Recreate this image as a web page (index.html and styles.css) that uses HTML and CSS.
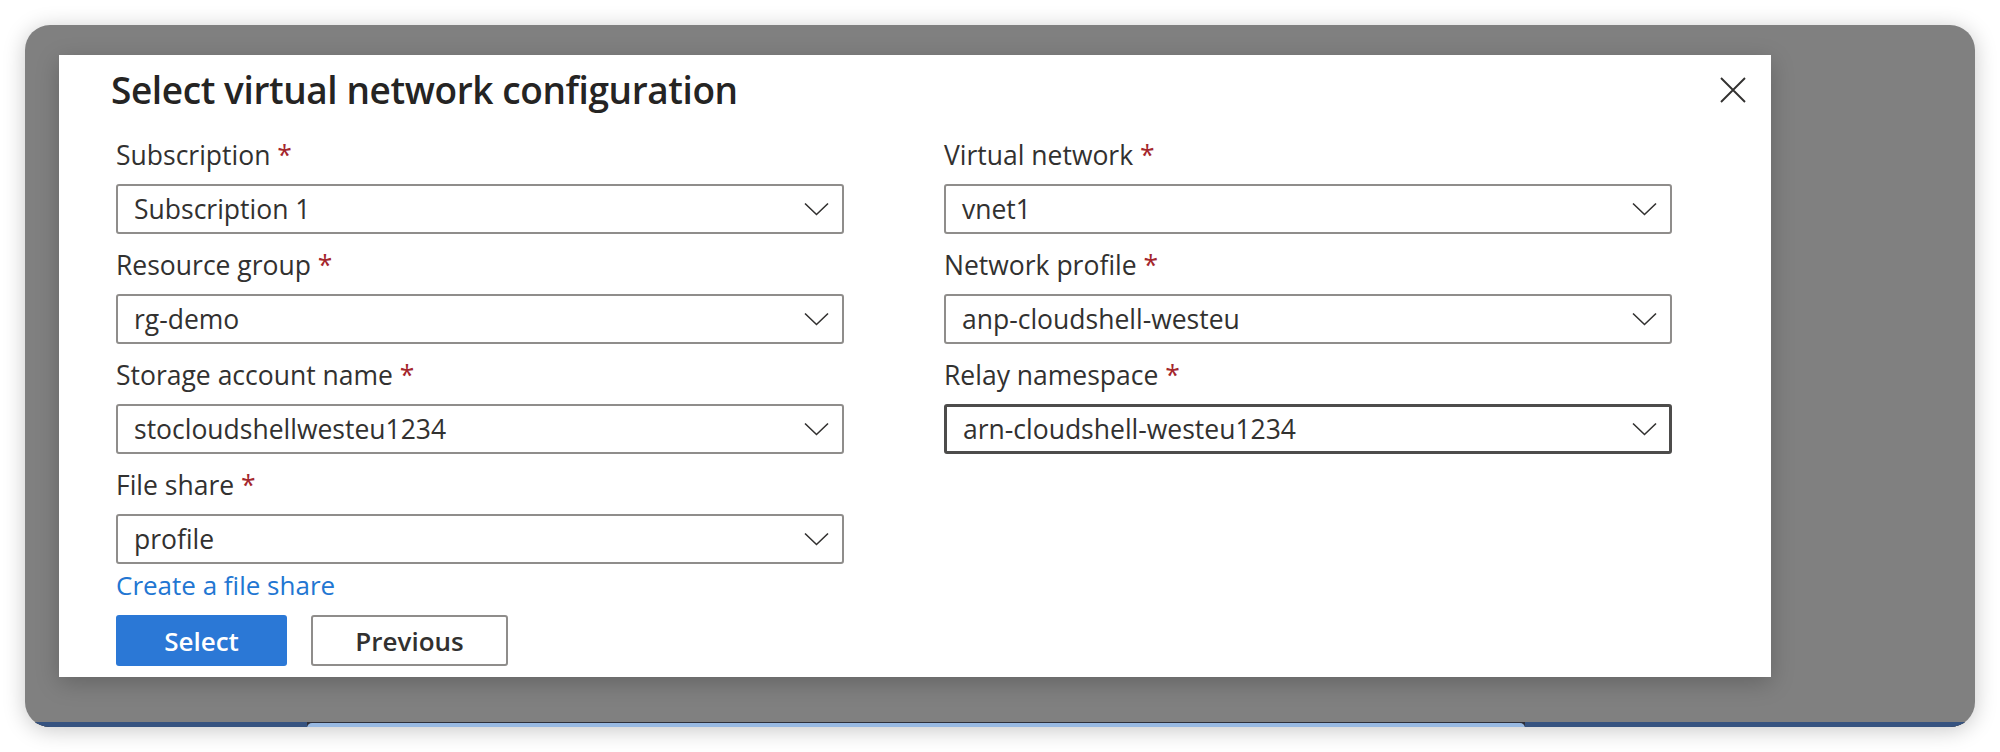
FILE: index.html
```html
<!DOCTYPE html>
<html lang="en">
<head>
<meta charset="utf-8">
<title>Select virtual network configuration</title>
<link rel="stylesheet" href="styles.css">
</head>
<body>
<div class="window">
  <div class="overlay">
    <div class="dialog">
      <div class="header">
        <h1 class="title">Select virtual network configuration</h1>
        <button class="close" aria-label="Close">
          <svg width="26" height="26" viewBox="0 0 26 26"><path d="M1 1 L25 25 M25 1 L1 25" stroke="#323130" stroke-width="1.9" fill="none"/></svg>
        </button>
      </div>
      <div class="form">
        <div class="col">
          <div class="field">
            <div class="label">Subscription <span class="req">*</span></div>
            <div class="select"><span class="value">Subscription 1</span><svg class="chev" width="25" height="14" viewBox="0 0 25 14"><path d="M1 1.5 L12.5 12.5 L24 1.5" stroke="#323130" stroke-width="1.6" fill="none"/></svg></div>
          </div>
          <div class="field">
            <div class="label">Resource group <span class="req">*</span></div>
            <div class="select"><span class="value">rg-demo</span><svg class="chev" width="25" height="14" viewBox="0 0 25 14"><path d="M1 1.5 L12.5 12.5 L24 1.5" stroke="#323130" stroke-width="1.6" fill="none"/></svg></div>
          </div>
          <div class="field">
            <div class="label">Storage account name <span class="req">*</span></div>
            <div class="select"><span class="value">stocloudshellwesteu1234</span><svg class="chev" width="25" height="14" viewBox="0 0 25 14"><path d="M1 1.5 L12.5 12.5 L24 1.5" stroke="#323130" stroke-width="1.6" fill="none"/></svg></div>
          </div>
          <div class="field">
            <div class="label">File share <span class="req">*</span></div>
            <div class="select"><span class="value">profile</span><svg class="chev" width="25" height="14" viewBox="0 0 25 14"><path d="M1 1.5 L12.5 12.5 L24 1.5" stroke="#323130" stroke-width="1.6" fill="none"/></svg></div>
          </div>
          <a class="link" href="#">Create a file share</a>
          <div class="actions">
            <button class="btn primary">Select</button>
            <button class="btn secondary">Previous</button>
          </div>
        </div>
        <div class="col">
          <div class="field">
            <div class="label">Virtual network <span class="req">*</span></div>
            <div class="select"><span class="value">vnet1</span><svg class="chev" width="25" height="14" viewBox="0 0 25 14"><path d="M1 1.5 L12.5 12.5 L24 1.5" stroke="#323130" stroke-width="1.6" fill="none"/></svg></div>
          </div>
          <div class="field">
            <div class="label">Network profile <span class="req">*</span></div>
            <div class="select"><span class="value">anp-cloudshell-westeu</span><svg class="chev" width="25" height="14" viewBox="0 0 25 14"><path d="M1 1.5 L12.5 12.5 L24 1.5" stroke="#323130" stroke-width="1.6" fill="none"/></svg></div>
          </div>
          <div class="field">
            <div class="label">Relay namespace <span class="req">*</span></div>
            <div class="select focused"><span class="value">arn-cloudshell-westeu1234</span><svg class="chev" width="25" height="14" viewBox="0 0 25 14"><path d="M1 1.5 L12.5 12.5 L24 1.5" stroke="#323130" stroke-width="1.6" fill="none"/></svg></div>
          </div>
        </div>
      </div>
    </div>
  </div>
  <div class="strip">
    <div class="seg dark first"></div>
    <div class="seg light"></div>
    <div class="seg dark last"></div>
  </div>
</div>
</body>
</html>
```

FILE: styles.css
```css
* { box-sizing: border-box; }
html, body { margin: 0; padding: 0; background: #ffffff; }
body {
  padding: 25px;
  font-family: "Open Sans", "Noto Sans", "Liberation Sans", sans-serif;
  color: #323130;
}
.window {
  width: 1950px;
  height: 702px;
  border-radius: 25px;
  overflow: hidden;
  background: #808080;
  display: flex;
  flex-direction: column;
  box-shadow: 0 3px 22px rgba(0, 0, 0, 0.22);
}
.overlay {
  flex: 1;
  padding: 30px 0 0 34px;
}
.dialog {
  width: 1712px;
  height: 622px;
  background: #ffffff;
  padding: 11px 25px 11px 52px;
  box-shadow: 0 6px 22px rgba(0, 0, 0, 0.22);
  display: flex;
  flex-direction: column;
}
.header {
  display: flex;
  justify-content: space-between;
  align-items: center;
  height: 48px;
}
.title {
  margin: 0;
  font-size: 37px;
  letter-spacing: -0.4px;
  line-height: 50px;
  font-weight: 600;
  color: #252423;
}
.close {
  border: 0;
  background: transparent;
  padding: 0;
  width: 26px;
  height: 26px;
  display: flex;
}
.form {
  display: flex;
  gap: 100px;
  margin: 26px 0 0 5px;
}
.col {
  width: 728px;
  display: flex;
  flex-direction: column;
  gap: 16px;
}
.field {
  display: flex;
  flex-direction: column;
}
.label {
  font-size: 26.5px;
  line-height: 30px;
  color: #323130;
  margin-bottom: 14px;
}
.req { color: #a4262c; }
.select {
  height: 50px;
  border: 2px solid #8f8d8b;
  border-radius: 3px;
  display: flex;
  align-items: center;
  justify-content: space-between;
  padding: 0 13px 0 16px;
  font-size: 26.5px;
  color: #323130;
}
.select.focused {
  border: 3px solid #4d4c4b;
  padding: 0 12px 0 16px;
}
.link {
  font-size: 26px;
  line-height: 30px;
  color: #2276d2;
  text-decoration: none;
  margin-top: -10px;
  align-self: flex-start;
}
.actions {
  display: flex;
  gap: 24px;
  margin-top: -1px;
}
.btn {
  height: 51px;
  font-family: inherit;
  font-size: 26px;
  font-weight: 600;
  border-radius: 3px;
}
.btn.primary {
  width: 171px;
  background: #2b78d6;
  color: #ffffff;
  border: 0;
}
.btn.secondary {
  width: 197px;
  background: #ffffff;
  color: #323130;
  border: 2px solid #8f8d8b;
}
.strip {
  height: 5px;
  display: flex;
  background: #2d2f3a;
}
.seg { height: 5px; }
.seg.dark { background: #365380; }
.seg.first { width: 282px; }
.seg.light {
  width: 1218px;
  background: #98b9e2;
  border-radius: 6px 6px 0 0;
  margin-top: 1px;
}
.seg.last { flex: 1; }
```
